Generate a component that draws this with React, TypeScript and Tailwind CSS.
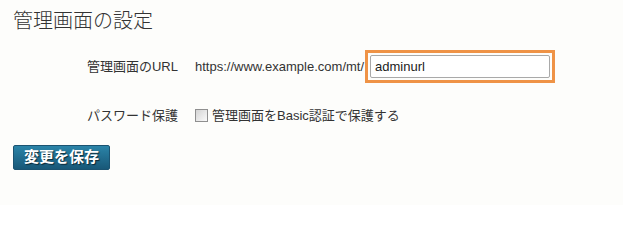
export default function App() {
  return (
    <div
      className="h-[205px] w-[623px] overflow-hidden bg-[#fdfdfb] text-[#222]"
      style={{ fontFamily: '"Liberation Sans", "Noto Sans CJK JP", sans-serif' }}
    >
      <div className="px-[13px] pt-[9px]">
        <h1 className="text-[20px] leading-[24px] font-light text-[#333]">管理画面の設定</h1>

        <div className="mt-[17px] flex items-center">
          <div className="w-[166px] pr-[1px] text-right text-[13px] text-[#333]">管理画面のURL</div>
          <div className="ml-[16px] flex items-center text-[13px]">
            <span className="text-[#333]">https://www.example.com/mt/</span>
            <div className="ml-[1px] border-[3px] border-[#ef9346] p-[2px]">
              <input
                defaultValue="adminurl"
                className="h-[23px] w-[180px] rounded-[2px] border border-[#a9a9a9] bg-white px-[4px] text-[13px] text-[#222] outline-none"
              />
            </div>
          </div>
        </div>

        <div className="mt-[23px] flex items-center">
          <div className="w-[166px] pr-[1px] text-right text-[13px] text-[#333]">パスワード保護</div>
          <label className="ml-[16px] flex items-center text-[13px] text-[#333]">
            <span className="mr-[4px] inline-block h-[13px] w-[13px] border border-[#8f8f8f] bg-gradient-to-br from-[#d4d4d4] to-[#fafafa]" />
            管理画面をBasic認証で保護する
          </label>
        </div>

        <button className="mt-[19px] h-[25px] w-[97px] rounded-[2px] border border-[#1b5371] bg-gradient-to-b from-[#2b84a8] to-[#185878] text-[15px] font-bold text-white [text-shadow:1px_1px_1px_rgba(0,0,0,0.6)]">
          変更を保存
        </button>
      </div>
    </div>
  );
}
